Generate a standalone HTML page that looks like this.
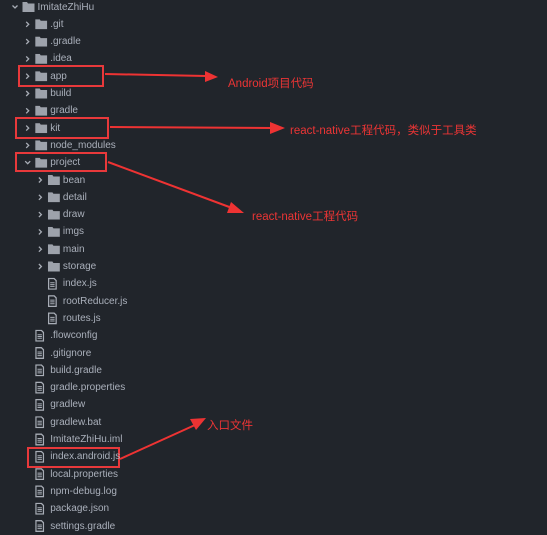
<!DOCTYPE html>
<html><head><meta charset="utf-8"><style>
html,body{margin:0;padding:0;background:#21252b;}
body{width:547px;height:535px;position:relative;overflow:hidden;font-family:"Liberation Sans","Noto Sans CJK SC",sans-serif;}
.r{position:absolute;height:17px;line-height:17px;font-size:10px;color:#aab0bb;white-space:nowrap;}
.ann{position:absolute;color:#ec3535;font-size:11.5px;white-space:nowrap;font-family:"Liberation Sans","Noto Sans CJK SC",sans-serif;}
.box{position:absolute;border:2px solid #e8393b;box-sizing:border-box;}
</style></head><body>
<svg width="547" height="535" style="position:absolute;left:0;top:0">
<defs>
<symbol id="fo" viewBox="0 0 12 10"><path d="M0 0h4.5l1 1.5H12V10H0z" fill="#9da2ab"/></symbol>
<symbol id="fi" viewBox="0 0 9 12"><path d="M0.7 0.7h5.5l2.1 2.1v8.5H0.7z" fill="none" stroke="#a8adb6" stroke-width="1.3"/><path d="M2.3 5h4.4M2.3 6.8h4.4M2.3 8.6h4.4" stroke="#a8adb6" stroke-width="1"/></symbol>
</defs>
<g id="tree"></g>
<g fill="#ee3333" stroke="#ee3333">
<path d="M105 74 L206 76" stroke-width="2"/><path d="M205 71 L218 77 L205 82 Z" stroke="none"/>
<path d="M110 127 L272 128" stroke-width="2"/><path d="M270 122 L285 128 L270 134 Z" stroke="none"/>
<path d="M108 162 L232 208" stroke-width="2"/><path d="M231 202 L244 213 L227 213 Z" stroke="none"/>
<path d="M120 459 L195 425" stroke-width="2"/><path d="M190 419 L206 418 L196 430 Z" stroke="none"/>
</g>
</svg>
<div class="box" style="left:18px;top:65px;width:86px;height:22px"></div>
<div class="box" style="left:15px;top:117px;width:94px;height:22px"></div>
<div class="box" style="left:15px;top:152px;width:92px;height:20px"></div>
<div class="box" style="left:27px;top:447px;width:93px;height:21px"></div>
<div class="ann" style="left:228px;top:75px">Android项目代码</div>
<div class="ann" style="left:290px;top:122px">react-native工程代码，类似于工具类</div>
<div class="ann" style="left:252px;top:208px">react-native工程代码</div>
<div class="ann" style="left:207px;top:417px">入口文件</div>
<div id="rows"></div>
<script>
var items=[
[0,'d','ImitateZhiHu',1],[1,'d','.git'],[1,'d','.gradle'],[1,'d','.idea'],[1,'d','app'],[1,'d','build'],[1,'d','gradle'],[1,'d','kit'],[1,'d','node_modules'],[1,'d','project',1],
[2,'d','bean'],[2,'d','detail'],[2,'d','draw'],[2,'d','imgs'],[2,'d','main'],[2,'d','storage'],[2,'f','index.js'],[2,'f','rootReducer.js'],[2,'f','routes.js'],
[1,'f','.flowconfig'],[1,'f','.gitignore'],[1,'f','build.gradle'],[1,'f','gradle.properties'],[1,'f','gradlew'],[1,'f','gradlew.bat'],[1,'f','ImitateZhiHu.iml'],[1,'f','index.android.js'],[1,'f','local.properties'],[1,'f','npm-debug.log'],[1,'f','package.json'],[1,'f','settings.gradle']];
var h='',g='';
items.forEach(function(it,i){
 var cy=7+i*17.3, lv=it[0], tx=37.5+lv*12.7;
 h+='<div class="r" style="left:'+tx+'px;top:'+(cy-8.5)+'px">'+it[2]+'</div>';
 if(it[1]=='d'){
  var ix=tx-15;
  g+='<use href="#fo" x="'+ix+'" y="'+(cy-5)+'" width="12" height="10"/>';
  var ax=tx-25;
  if(it[3]) g+='<path d="M'+(ax)+' '+(cy-1.5)+' l2.5 2.5 l2.5 -2.5" fill="none" stroke="#a8adb6" stroke-width="1.3"/>';
  else g+='<path d="M'+(ax+1)+' '+(cy-2.5)+' l2.5 2.5 l-2.5 2.5" fill="none" stroke="#a8adb6" stroke-width="1.3"/>';
 } else {
  g+='<use href="#fi" x="'+(tx-15)+'" y="'+(cy-6)+'" width="9" height="12"/>';
 }
});
document.getElementById('rows').innerHTML=h;
document.getElementById('tree').innerHTML=g;
</script>
</body></html>
